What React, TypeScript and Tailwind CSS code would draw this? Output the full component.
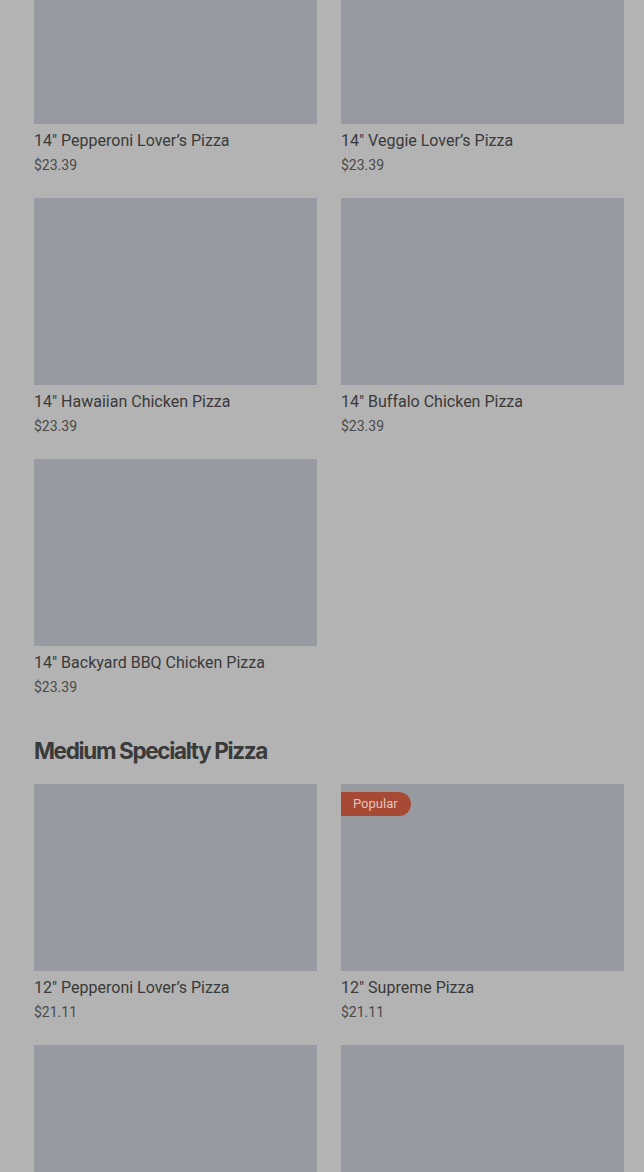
import React from 'react';

type Item = { name: string; price: string; badge?: string };

const large: Item[] = [
  { name: '14" Pepperoni Lover\u2019s Pizza', price: '$23.39' },
  { name: '14" Veggie Lover\u2019s Pizza', price: '$23.39' },
  { name: '14" Hawaiian Chicken Pizza', price: '$23.39' },
  { name: '14" Buffalo Chicken Pizza', price: '$23.39' },
  { name: '14" Backyard BBQ Chicken Pizza', price: '$23.39' },
];

const medium: Item[] = [
  { name: '12" Pepperoni Lover\u2019s Pizza', price: '$21.11' },
  { name: '12" Supreme Pizza', price: '$21.11', badge: 'Popular' },
  { name: '12" Pizza', price: '$21.11' },
  { name: '12" Pizza', price: '$21.11' },
];

function MenuCard({ item }: { item: Item }) {
  return (
    <div className="flex flex-col">
      <div className="relative h-[187px] bg-[#979aa1]">
        {item.badge && (
          <span className="absolute left-0 top-2 h-6 pl-3 pr-[13px] flex items-center rounded-r-full bg-[#a64a35] text-[13px] text-[#e3c3bb] font-['Roboto',sans-serif]">
            {item.badge}
          </span>
        )}
      </div>
      <p className="mt-[5px] text-[16px] leading-6 text-[#3a3a3a] font-['Roboto',sans-serif]">
        {item.name}
      </p>
      <p className="mt-[2px] text-[14px] leading-5 text-[#4a4a4a] font-['Roboto',sans-serif]">
        {item.price}
      </p>
    </div>
  );
}

export default function App() {
  return (
    <div className="h-[1172px] overflow-hidden bg-[#b3b3b3]">
      <div className="pl-[34px] pr-[20px] -mt-[63px]">
        <div className="grid grid-cols-2 gap-x-6 gap-y-[23px]">
          {large.map((item, i) => (
            <MenuCard key={i} item={item} />
          ))}
        </div>

        <section className="mt-[38px]">
          <h2 className="mb-[17px] text-[22.5px] leading-8 font-bold tracking-[-0.06em] text-[#3a3a3a] font-['Inter',sans-serif]">
            Medium Specialty Pizza
          </h2>
          <div className="grid grid-cols-2 gap-x-6 gap-y-[23px]">
            {medium.map((item, i) => (
              <MenuCard key={i} item={item} />
            ))}
          </div>
        </section>
      </div>
    </div>
  );
}
